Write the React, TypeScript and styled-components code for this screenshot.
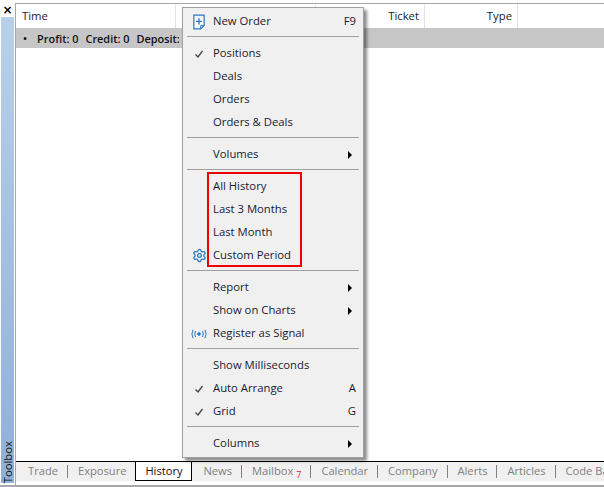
import React from 'react';
import styled, { createGlobalStyle } from 'styled-components';
import { Settings } from 'lucide-react';

const GlobalStyle = createGlobalStyle`
  html, body {
    margin: 0;
    background: #fff;
  }
  body {
    font-family: "Open Sans", "Noto Sans", "Liberation Sans", sans-serif;
    font-size: 11.3px;
    color: #1a1a2e;
  }
`;

const Window = styled.div`
  position: relative;
  width: 604px;
  height: 487px;
  overflow: hidden;
  display: grid;
  grid-template-columns: 15px 1fr;
  padding-top: 3px;
  box-sizing: border-box;
`;

const Sidebar = styled.div`
  display: flex;
  flex-direction: column;
  height: 480px;
`;

const CloseBox = styled.div`
  height: 14px;
  display: flex;
  align-items: center;
  justify-content: center;
  font: bold 12px "DejaVu Sans", sans-serif;
  color: #000;
`;

const SideBar = styled.div`
  flex: 1;
  margin: 0 1px;
  background: linear-gradient(#b9d0ea, #8fb0d8);
  display: flex;
  justify-content: center;
  align-items: flex-end;
`;

const SideLabel = styled.span`
  writing-mode: vertical-rl;
  transform: rotate(180deg);
  color: #111;
  line-height: 13px;
`;

const Main = styled.div`
  display: flex;
  flex-direction: column;
  height: 484px;
  border-top: 1px solid #a8a8a8;
  border-left: 1px solid #a8a8a8;
  box-sizing: border-box;
`;

const Header = styled.div`
  height: 24px;
  display: flex;
  flex-shrink: 0;
`;

const HeaderCell = styled.div<{ $width: number; $right?: boolean; $bare?: boolean }>`
  width: ${p => p.$width}px;
  box-sizing: border-box;
  padding: 0 5px 0 6px;
  line-height: 24px;
  text-align: ${p => (p.$right ? 'right' : 'left')};
  border-right: ${p => (p.$bare ? 'none' : '1px solid #e4e4e4')};
`;

const Summary = styled.div`
  height: 20px;
  background: #c6c6c6;
  display: flex;
  align-items: center;
  font-size: 10.9px;
  font-weight: 600;
  color: #101018;
  padding-left: 7px;
  gap: 7px;
  flex-shrink: 0;
  white-space: nowrap;
`;

const SummaryField = styled.span`
  &:first-child {
    margin-right: 3px;
  }
`;

const Body = styled.div`
  flex: 1;
`;

const TabBar = styled.div`
  height: 20px;
  box-sizing: border-box;
  display: flex;
  flex-shrink: 0;
  background: #f0f0f0;
  border-top: 1px solid #000;
  margin-bottom: 6px;
  white-space: nowrap;
  padding-left: 2px;
  font-size: 11.15px;
`;

const Tab = styled.div<{ $active?: boolean; $divider?: boolean }>`
  position: relative;
  padding: 0 10px;
  line-height: 18px;
  color: ${p => (p.$active ? '#111' : '#808080')};
  background: ${p => (p.$active ? '#fff' : 'transparent')};
  ${p => p.$active && 'border: 1px solid #000; border-top: none; height: 19px; width: 57px; padding: 0; margin: 0 1px 0 -1px; text-align: center; box-sizing: border-box;'}
  ${p => p.$divider && `
    &::after {
      content: '';
      position: absolute;
      right: 0;
      top: 3px;
      height: 13px;
      border-right: 1px solid #808080;
    }
  `}
`;

const MailCount = styled.sub`
  color: #e0233a;
  font-size: 9px;
  line-height: 0;
  margin-left: 3px;
`;

const BottomRule = styled.div`
  position: absolute;
  left: 0;
  right: 0;
  bottom: 0;
  height: 2px;
  background: #a8a8a8;
`;

const Menu = styled.div`
  position: absolute;
  left: 182px;
  top: 7px;
  width: 182px;
  box-sizing: border-box;
  padding: 2px;
  background: #f0f0f0;
  border: 1px solid #a0a0a0;
  box-shadow: 3px 3px 3px rgba(0, 0, 0, 0.45);
`;

const Row = styled.div`
  height: 23px;
  display: grid;
  grid-template-columns: 28px 1fr auto;
  align-items: center;
  padding-right: 4px;
  color: #1a1a30;
`;

const RowIcon = styled.span`
  display: flex;
  justify-content: center;
  align-items: center;
  color: #3a3a3a;
`;

const RowLabel = styled.span`
  white-space: nowrap;
  line-height: 15px;
  margin-bottom: 2px;
`;

const Shortcut = styled.span`
  padding-right: 1px;
  line-height: 15px;
  margin-bottom: 2px;
`;

const SubArrow = styled.span`
  width: 0;
  height: 0;
  margin-right: 5px;
  border-left: 4px solid #000;
  border-top: 4px solid transparent;
  border-bottom: 4px solid transparent;
`;

const Separator = styled.div`
  height: 1px;
  margin: 3px 2px 5px;
  background: #a0a0a0;
`;

const PeriodGroup = styled.div`
  position: relative;
`;

const Highlight = styled.div`
  position: absolute;
  left: 22px;
  top: -3px;
  width: 95px;
  height: 95px;
  box-sizing: border-box;
  border: 2px solid #f00000;
  pointer-events: none;
`;

const CheckIcon = () => (
  <svg width="10" height="10" viewBox="0 0 10 10" fill="none">
    <path d="M1.5 5.5 L4 8 L8.5 2" stroke="#444" strokeWidth="1.3" />
  </svg>
);

const NewOrderIcon = () => (
  <svg width="12" height="16" viewBox="0 0 14 18" fill="none">
    <path d="M1 1 H13 V13 L9 17 H1 Z" stroke="#2a77c0" strokeWidth="1.4" fill="#f8fbff" />
    <path d="M7 4.5 V12 M3.5 8.25 H10.5" stroke="#2a77c0" strokeWidth="1.5" />
    <path d="M13 13 H9 V17" stroke="#2a77c0" strokeWidth="1.1" />
  </svg>
);

const SignalIcon = () => (
  <svg width="16" height="10" viewBox="0 0 16 10" fill="none" stroke="#2a77c0" strokeWidth="1">
    <circle cx="8" cy="5" r="1.3" fill="#2a77c0" />
    <path d="M4.5 2 Q3 5 4.5 8 M11.5 2 Q13 5 11.5 8" />
    <path d="M2 0.8 Q-0.2 5 2 9.2 M14 0.8 Q16.2 5 14 9.2" />
  </svg>
);

type ItemProps = {
  label: string;
  icon?: React.ReactNode;
  shortcut?: string;
  submenu?: boolean;
};

const Item: React.FC<ItemProps> = ({ label, icon, shortcut, submenu }) => (
  <Row>
    <RowIcon>{icon}</RowIcon>
    <RowLabel>{label}</RowLabel>
    {shortcut && <Shortcut>{shortcut}</Shortcut>}
    {submenu && <SubArrow />}
  </Row>
);

const tabs = ['Trade', 'Exposure', 'History', 'News', 'Mailbox', 'Calendar', 'Company', 'Alerts', 'Articles', 'Code Base'];

const App: React.FC = () => (
  <Window>
    <GlobalStyle />
    <Sidebar>
      <CloseBox>×</CloseBox>
      <SideBar>
        <SideLabel>Toolbox</SideLabel>
      </SideBar>
    </Sidebar>
    <Main>
      <Header>
        <HeaderCell $width={160}>Time</HeaderCell>
        <HeaderCell $width={140} />
        <HeaderCell $width={109} $right>Ticket</HeaderCell>
        <HeaderCell $width={93} $right>Type</HeaderCell>
      </Header>
      <Summary>
        <SummaryField>•</SummaryField>
        <SummaryField>Profit: 0</SummaryField>
        <SummaryField>Credit: 0</SummaryField>
        <SummaryField>Deposit: 0</SummaryField>
      </Summary>
      <Body />
      <TabBar>
        {tabs.map(name => {
          const active = name === 'History';
          const beforeActive = name === 'Exposure';
          return (
            <Tab key={name} $active={active} $divider={!active && !beforeActive && name !== 'Code Base'}>
              {name}
              {name === 'Mailbox' && <MailCount>7</MailCount>}
            </Tab>
          );
        })}
      </TabBar>
    </Main>
    <BottomRule />
    <Menu>
      <Item label="New Order" icon={<NewOrderIcon />} shortcut="F9" />
      <Separator />
      <Item label="Positions" icon={<CheckIcon />} />
      <Item label="Deals" />
      <Item label="Orders" />
      <Item label="Orders & Deals" />
      <Separator />
      <Item label="Volumes" submenu />
      <Separator />
      <PeriodGroup>
        <Highlight />
        <Item label="All History" />
        <Item label="Last 3 Months" />
        <Item label="Last Month" />
        <Item label="Custom Period" icon={<Settings size={15} color="#2a77c0" />} />
      </PeriodGroup>
      <Separator />
      <Item label="Report" submenu />
      <Item label="Show on Charts" submenu />
      <Item label="Register as Signal" icon={<SignalIcon />} />
      <Separator />
      <Item label="Show Milliseconds" />
      <Item label="Auto Arrange" icon={<CheckIcon />} shortcut="A" />
      <Item label="Grid" icon={<CheckIcon />} shortcut="G" />
      <Separator />
      <Item label="Columns" submenu />
    </Menu>
  </Window>
);

export default App;
